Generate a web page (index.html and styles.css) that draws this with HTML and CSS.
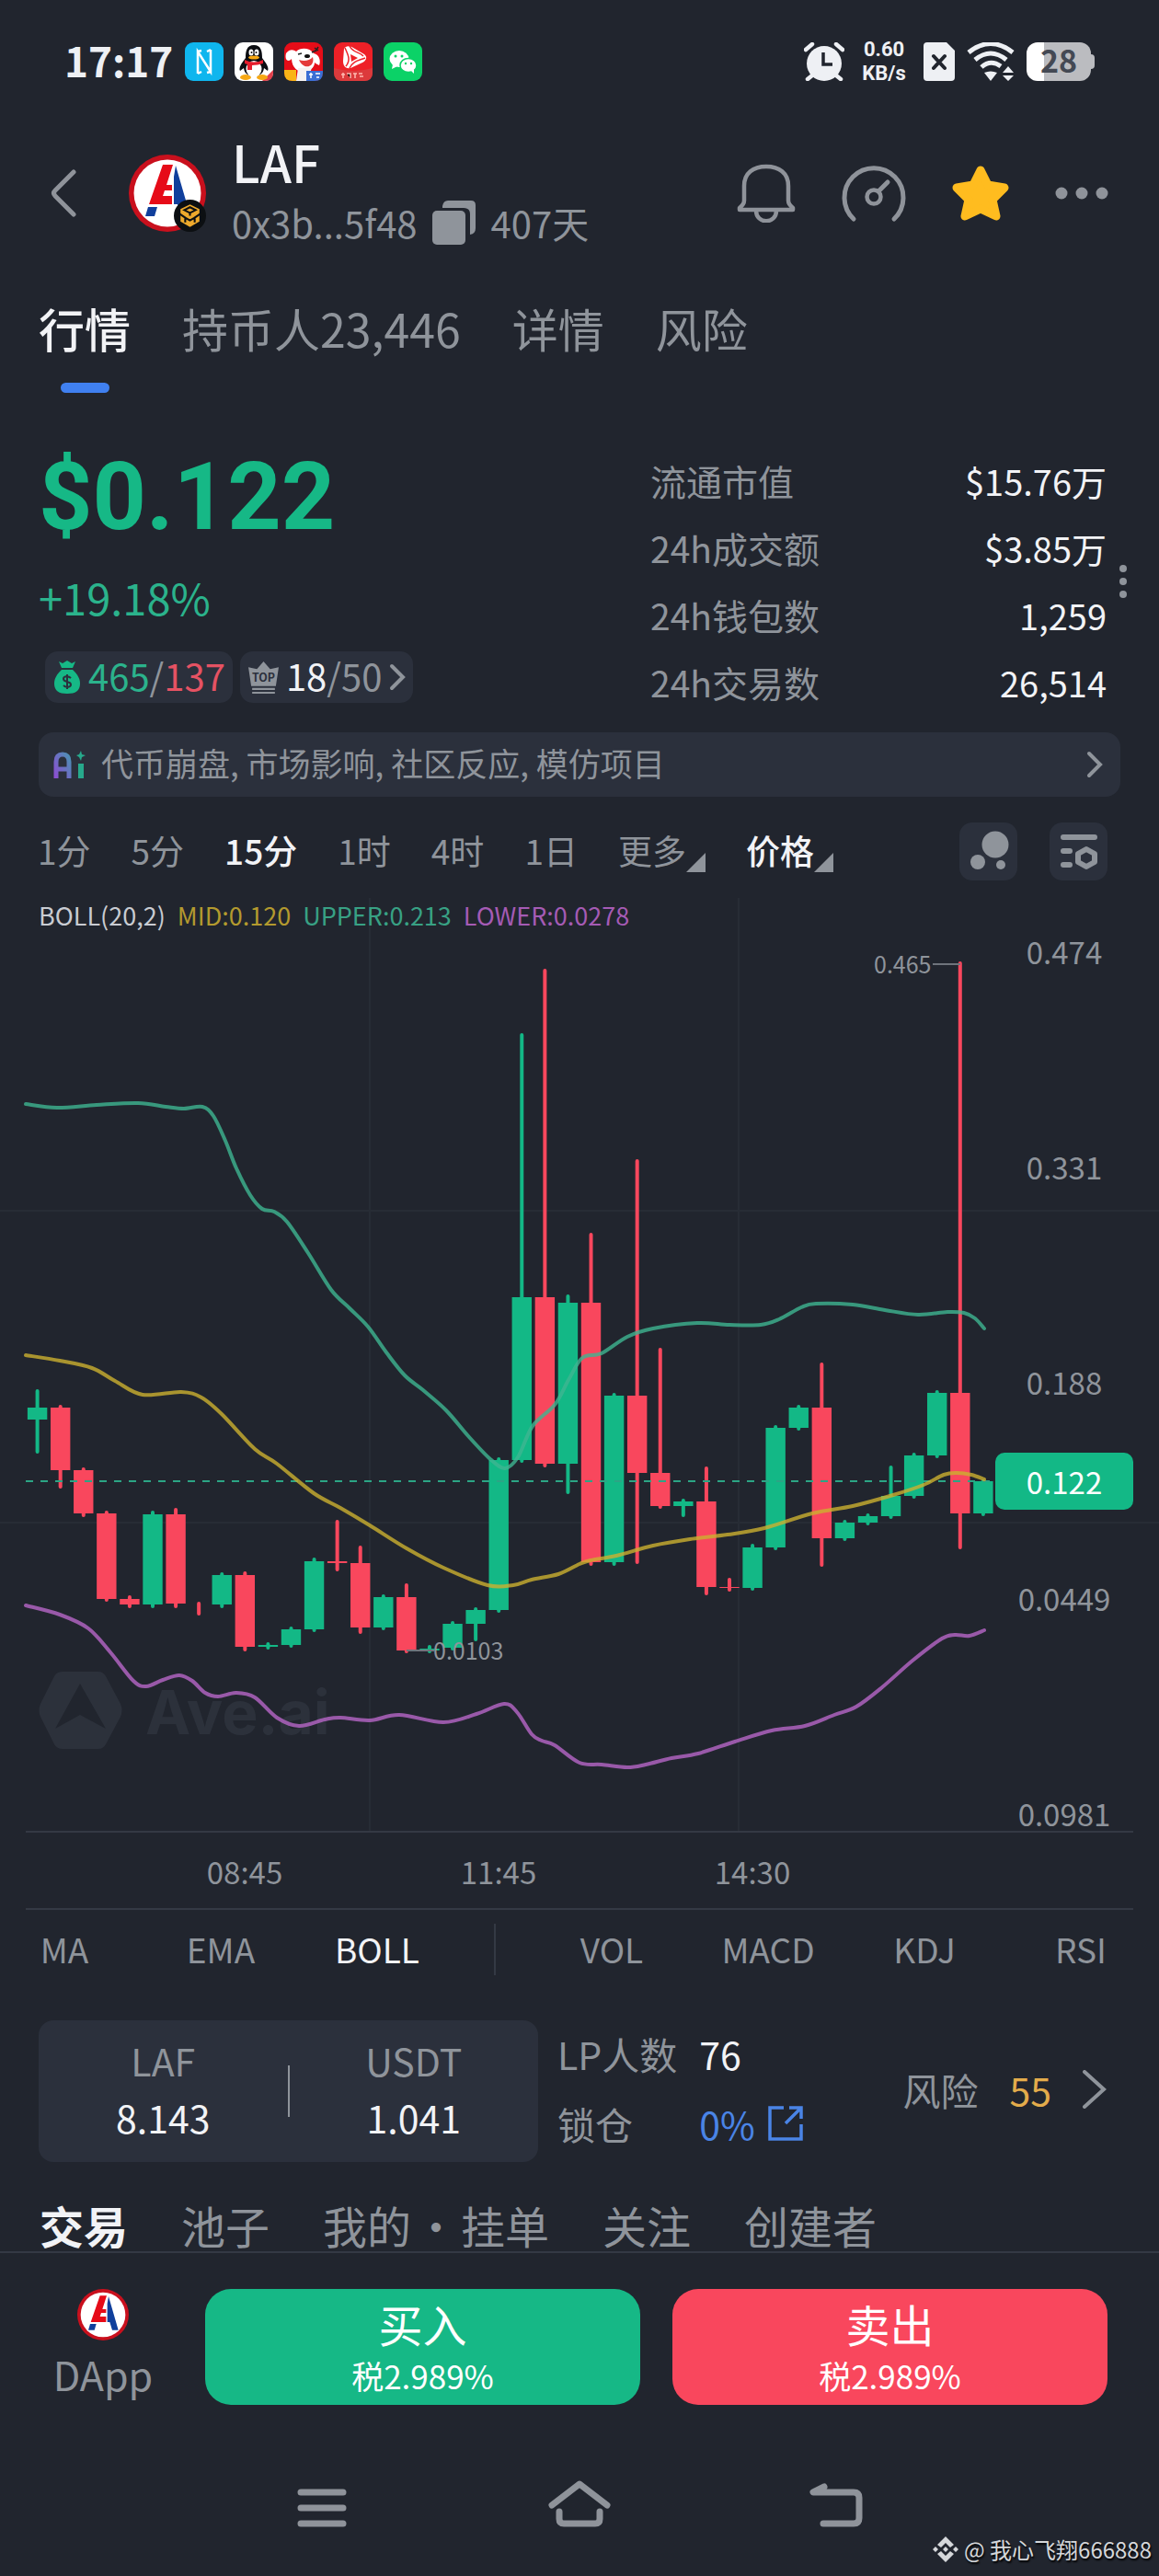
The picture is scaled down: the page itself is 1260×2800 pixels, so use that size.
FILE: index.html
```html
<!DOCTYPE html>
<html lang="zh-CN">
<head>
  <meta charset="UTF-8">
  <meta name="viewport" content="width=device-width, initial-scale=1.0">
  <title>LAF</title>
  <link rel="stylesheet" href="styles.css">
</head>
<body>
  <!-- shared token logo -->
  <svg class="defs" width="0" height="0" aria-hidden="true">
    <symbol id="laf-logo" viewBox="0 0 84 84">
      <circle cx="42" cy="42" r="42" fill="#c9101d"/>
      <circle cx="42" cy="42" r="36.5" fill="#fff"/>
      <path d="M37 11H48L41 33H47V39H39L37 45H47V54H22Z" fill="#e60b18"/>
      <path d="M51 12L67 67H57L53 54H49V24Z" fill="#103f9c"/>
      <path d="M21 57H31L28 67H18Z" fill="#103f9c"/>
    </symbol>
  </svg>

  <div class="status-bar">
    <span class="clock">17:17</span>
    <div class="app-icons">
      <svg viewBox="0 0 42 42"><rect width="42" height="42" rx="9" fill="#0fb6ee"/><path d="M14 34V10L28 32V8M14 34L18 32M14 10L18 9M28 32L24 33M28 8L24 10" fill="none" stroke="#fff" stroke-width="2.5"/></svg>
      <svg viewBox="0 0 42 42"><rect width="42" height="42" rx="9" fill="#fff"/><path d="M30 42L42 30V33Q42 42 33 42Z" fill="#e2404c"/><ellipse cx="12" cy="38" rx="6" ry="3" fill="#f7a813"/><ellipse cx="30" cy="38" rx="6" ry="3" fill="#f7a813"/><path d="M21 3C13 3 12 10 12 17C8 22 4 28 6 31L10 28C11 40 31 40 32 28L36 31C38 28 34 22 30 17C30 10 29 3 21 3Z" fill="#0b0d12"/><ellipse cx="21" cy="29" rx="8.5" ry="9" fill="#fff"/><ellipse cx="18" cy="11" rx="2.5" ry="3.5" fill="#fff"/><ellipse cx="24" cy="11" rx="2.5" ry="3.5" fill="#fff"/><circle cx="18.5" cy="11" r="1" fill="#111"/><circle cx="23.5" cy="11" r="1" fill="#111"/><ellipse cx="21" cy="16.5" rx="6" ry="2" fill="#f7a813"/><path d="M11 19Q21 24 31 19V23Q25 25 19 25V30H14V24L11 23Z" fill="#e51c2c"/></svg>
      <svg viewBox="0 0 42 42"><rect width="42" height="42" rx="9" fill="#e60d18"/><path d="M0 30H13V42H9Q0 42 0 33Z" fill="#f9b417"/><path d="M2 12C6 7 10 8 13 10C18 5 28 6 32 12C38 13 40 20 38 25C36 24 34 23 33 22C33 34 9 38 8 18C5 22 0 20 2 12Z" fill="#fff"/><path d="M13 42L15 28L30 27L26 42Z" fill="#f5f2f2"/><path d="M16 19C21 21 28 20 31 16C34 27 21 31 16 19Z" fill="#e43a3a"/><ellipse cx="25" cy="15" rx="3" ry="2" fill="#111"/><path d="M15 13L19 12M30 11L34 9M33 6L37 9M37 5L34 10" stroke="#222" stroke-width="1.5"/><path d="M24 31H42V33Q42 42 33 42H24Z" fill="#3b6fd4"/><path d="M27 35H31M29 33V39M34 34H39M35 38H38" stroke="#fff" stroke-width="1.5"/></svg>
      <svg viewBox="0 0 42 42"><rect width="42" height="42" rx="9" fill="#ee2027"/><path d="M11 7C13 3 18 4 21 6L33 13C37 16 35 20 31 22L18 28C12 29 10 25 10 20Z" fill="#fff"/><path d="M17 4C21 12 28 10 32 15M34 17C26 20 21 20 17 28M13 26C19 19 15 13 12 6" fill="none" stroke="#ee2027" stroke-width="1.5"/><path d="M18 13L26 17L19 21Z" fill="#ee2027"/><path d="M0 28Q21 34 42 28V33Q42 42 33 42H9Q0 42 0 33Z" fill="#dc3a3c"/><path d="M8 35H12M10 33V39M14 34H18V39M21 34H25M23 34V39M27 34H31M28 37H32" stroke="#ffb9b0" stroke-width="1.5"/></svg>
      <svg viewBox="0 0 42 42"><rect width="42" height="42" rx="9" fill="#0bd267"/><ellipse cx="17" cy="18" rx="10.5" ry="9" fill="#fff"/><path d="M10 24L9 29L15 26Z" fill="#fff"/><ellipse cx="27" cy="25" rx="9" ry="7.5" fill="#fff" stroke="#0bd267" stroke-width="1.5"/><path d="M30 31L33 34V29Z" fill="#fff"/><g fill="#0bd267"><circle cx="13" cy="15" r="1.5"/><circle cx="20" cy="15" r="1.5"/><circle cx="24" cy="23" r="1.2"/><circle cx="30" cy="23" r="1.2"/></g></svg>
    </div>
    <div class="status-right">
      <svg class="alarm" viewBox="0 0 44 42"><circle cx="22" cy="23" r="19" fill="#eef0f4"/><path d="M2 8L9 2M42 8L35 2M4 40L9 36M40 40L35 36" stroke="#eef0f4" stroke-width="4.5" stroke-linecap="round"/><path d="M21 11V24H31" fill="none" stroke="#21252e" stroke-width="3.5"/></svg>
      <div class="net-speed"><span>0.60</span><span>KB/s</span></div>
      <svg class="sim" viewBox="0 0 34 42"><path d="M4 0H25L34 9V38Q34 42 30 42H4Q0 42 0 38V4Q0 0 4 0Z" fill="#eef0f4"/><path d="M11 15L23 28M23 15L11 28" stroke="#21252e" stroke-width="4" stroke-linecap="round"/></svg>
      <svg class="wifi" viewBox="0 0 52 42"><path d="M2 11Q26 -8 50 11M9 19Q26 5 43 19M16 27Q26 18 37 26" fill="none" stroke="#eef0f4" stroke-width="5"/><path d="M19 33Q26 30 33 33L26 42ZM39 33L45 26L51 33ZM39 36H51L45 42Z" fill="#eef0f4"/></svg>
      <div class="battery"><span>28</span></div>
    </div>
  </div>

  <header class="token-header">
    <a class="back" href="#" aria-label="返回"><svg viewBox="0 0 28 52"><path d="M25 3L5 23Q2 26 5 29L25 49" fill="none" stroke="#8f939a" stroke-width="5" stroke-linecap="round"/></svg></a>
    <div class="token-logo">
      <svg viewBox="0 0 84 84"><use href="#laf-logo"/></svg>
      <svg class="chain" viewBox="0 0 34 34"><circle cx="17" cy="17" r="17" fill="#0c0f12"/><path d="M17 5L27 10V23L17 29L7 23V10Z" fill="#eea92c"/><path d="M11 11L17 8L23 11L17 14ZM6 15L12 19V24M28 15L22 19V24M17 14V17M12 19L17 22L22 19" fill="none" stroke="#0c0f12" stroke-width="2"/></svg>
    </div>
    <div class="token-name">
      <h1>LAF</h1>
      <div class="token-sub">
        <span>0x3b...5f48</span>
        <button type="button" aria-label="复制"><svg class="copy" viewBox="0 0 48 48"><path d="M11 6Q12 0 17 0H42Q47 0 47 5V30Q47 36 41 37V15Q41 8 34 8H11Z" fill="#8f949b"/><rect x="0" y="11" width="36" height="37" rx="5" fill="#8f949b"/></svg></button>
        <span>407天</span>
      </div>
    </div>
    <div class="header-actions">
      <button type="button" aria-label="提醒"><svg class="bell" viewBox="0 0 64 64"><path d="M8 40V24C8 10 18 3 32 3S56 10 56 24V40Q56 44 61 48V50H3V48Q8 44 8 40Z" fill="none" stroke="#8f939a" stroke-width="4.5" stroke-linejoin="round"/><path d="M21 51C21 66 43 66 43 51" fill="none" stroke="#8f939a" stroke-width="4.5"/></svg></button>
      <button type="button" aria-label="测速"><svg class="gauge" viewBox="0 0 70 64"><path d="M13 60A32 32 0 1 1 57 60" fill="none" stroke="#8f939a" stroke-width="5" stroke-linecap="round"/><circle cx="35" cy="36" r="7.5" fill="none" stroke="#8f939a" stroke-width="4.5"/><path d="M40 30L50 20" stroke="#8f939a" stroke-width="5" stroke-linecap="round"/></svg></button>
      <button type="button" aria-label="收藏"><svg class="star" viewBox="0 0 62 60"><path d="M31 5L39 21L57 24L44 37L48 55L31 47L14 55L18 37L5 24L23 21Z" fill="#ffbc1f" stroke="#ffbc1f" stroke-width="9" stroke-linejoin="round"/></svg></button>
      <button type="button" aria-label="更多"><svg class="more" viewBox="0 0 58 14"><g fill="#8f939a"><circle cx="7" cy="7" r="6.5"/><circle cx="29" cy="7" r="6.5"/><circle cx="51" cy="7" r="6.5"/></g></svg></button>
    </div>
  </header>

  <nav class="main-tabs">
    <a class="active" href="#">行情</a>
    <a href="#">持币人23,446</a>
    <a href="#">详情</a>
    <a href="#">风险</a>
  </nav>

  <section class="summary">
    <div class="price-box">
      <div class="price">$0.122</div>
      <div class="change">+19.18%</div>
      <div class="pills">
        <div class="pill">
          <svg class="bag" viewBox="0 0 30 36"><path d="M6 1L10 3L15 0L20 3L24 1L21 8H9Z" fill="#16b886"/><path d="M9 10H21C26 15 29 19 29 25C29 33 24 36 15 36S1 33 1 25C1 19 4 15 9 10Z" fill="#16b886"/><path d="M19 19C16 16 11 17 11 20C11 24 19 22 19 26C19 29 14 30 11 27M15 15V31" fill="none" stroke="#2b303c" stroke-width="2"/></svg>
          <span><span class="up">465</span>/<span class="down">137</span></span>
        </div>
        <div class="pill">
          <svg class="crown" viewBox="0 0 32 34"><path d="M0 6L9 8L16 0L23 8L32 6L29 26H3Z" fill="#8f949b"/><path d="M4 28H28V30H4ZM4 32H28V34H4Z" fill="#8f949b"/><text x="16" y="21" text-anchor="middle" class="crown-text">TOP</text></svg>
          <span><span class="white">18</span>/50</span>
          <svg class="chev" viewBox="0 0 18 30"><path d="M3 3L15 15L3 27" fill="none" stroke="#8f949b" stroke-width="4" stroke-linecap="round"/></svg>
        </div>
      </div>
    </div>
    <dl class="stats">
      <div><dt>流通市值</dt><dd>$15.76万</dd></div>
      <div><dt>24h成交额</dt><dd>$3.85万</dd></div>
      <div><dt>24h钱包数</dt><dd>1,259</dd></div>
      <div><dt>24h交易数</dt><dd>26,514</dd></div>
    </dl>
    <svg class="dots-v" viewBox="0 0 8 38"><g fill="#8f949b"><circle cx="4" cy="5" r="4"/><circle cx="4" cy="19" r="4"/><circle cx="4" cy="33" r="4"/></g></svg>
  </section>

  <a class="ai-bar" href="#">
    <svg class="ai-icon" viewBox="0 0 36 30"><defs><linearGradient id="ai" x1="0" y1="1" x2="1" y2="0"><stop offset="0" stop-color="#8a4fd0"/><stop offset="1" stop-color="#4d8fb5"/></linearGradient></defs><path d="M3 30V12Q3 4 10 4T17 12V30M3 20H17" fill="none" stroke="url(#ai)" stroke-width="5"/><path d="M27 14H33V30H27Z" fill="#27a98c"/><path d="M30 0L31 4L35 5L31 7L30 11L28 7L25 5L28 4Z" fill="#27a98c"/></svg>
    <span>代币崩盘, 市场影响, 社区反应, 模仿项目</span>
    <svg class="chev" viewBox="0 0 18 30"><path d="M3 3L15 15L3 27" fill="none" stroke="#8f949b" stroke-width="4" stroke-linecap="round"/></svg>
  </a>

  <div class="intervals">
    <button type="button">1分</button>
    <button type="button">5分</button>
    <button type="button" class="active">15分</button>
    <button type="button">1时</button>
    <button type="button">4时</button>
    <button type="button">1日</button>
    <button type="button" class="drop">更多</button>
    <button type="button" class="drop active">价格</button>
    <div class="chart-tools">
      <button type="button" aria-label="气泡图"><svg viewBox="0 0 63 63"><g fill="#8f949b"><circle cx="39" cy="24" r="14.5"/><circle cx="20" cy="43" r="8"/><circle cx="45" cy="46" r="5"/></g></svg></button>
      <button type="button" aria-label="指标设置"><svg viewBox="0 0 63 63"><path d="M15 16H49M15 31H22M15 46H22" stroke="#8f949b" stroke-width="6" stroke-linecap="round"/><path d="M40 29L49 34V43L40 48L31 43V34Z" fill="none" stroke="#8f949b" stroke-width="6" stroke-linejoin="round"/></svg></button>
    </div>
  </div>

  <div class="chart">
    <div class="legend">
      <span>BOLL(20,2)</span>
      <span class="mid">MID:0.120</span>
      <span class="upper">UPPER:0.213</span>
      <span class="lower">LOWER:0.0278</span>
    </div>
    <svg viewBox="0 957 1260 1117">
      <path class="grid" d="M402 976V1990M803 976V1990M0 1316H1260M0 1655H1260"/>
      <path class="axis" d="M28 1991H1232"/>
      <g class="watermark">
        <path fill-rule="evenodd" d="M68 1817H107Q112 1817 115 1822L131 1852Q134 1859 131 1866L115 1896Q112 1901 107 1901H68Q62 1901 59 1896L44 1866Q41 1859 44 1852L59 1822Q62 1817 68 1817ZM87 1830L60 1879L87 1864L115 1879Z"/>
        <text x="158" y="1885">Ave.ai</text>
      </g>
      <g id="candles"></g>
      <path class="last-price" d="M28 1610H1082"/>
      <g id="bands"></g>
      <path class="mark" d="M1014 1048H1044M442 1794H472"/>
      <g class="mark-text">
        <text x="950" y="1058">0.465</text>
        <text x="471" y="1804">0.0103</text>
      </g>
      <g class="scale">
        <text x="1157" y="1048">0.474</text>
        <text x="1157" y="1282">0.331</text>
        <text x="1157" y="1516">0.188</text>
        <text x="1157" y="1751">0.0449</text>
        <text x="1157" y="1985">0.0981</text>
        <text x="266" y="2048">08:45</text>
        <text x="542" y="2048">11:45</text>
        <text x="818" y="2048">14:30</text>
        <rect x="1082" y="1579" width="150" height="62" rx="10"/>
        <text class="tag" x="1157" y="1624">0.122</text>
      </g>
    </svg>
  </div>

  <div class="indicators">
    <div>
      <button type="button">MA</button>
      <button type="button">EMA</button>
      <button type="button" class="active">BOLL</button>
      <i class="sep"></i>
      <button type="button">VOL</button>
      <button type="button">MACD</button>
      <button type="button">KDJ</button>
      <button type="button">RSI</button>
    </div>
  </div>

  <section class="pool">
    <div class="pool-card">
      <div><span>LAF</span><b>8.143</b></div>
      <i></i>
      <div><span>USDT</span><b>1.041</b></div>
    </div>
    <dl class="lp">
      <dt>LP人数</dt><dd>76</dd>
      <dt>锁仓</dt>
      <dd><a href="#">0%<svg viewBox="0 0 38 38"><path d="M17 2H2V36H36V20M23 2H36V14M35 3L19 19" fill="none" stroke="#4a84e6" stroke-width="3.5"/></svg></a></dd>
    </dl>
    <a class="risk" href="#">
      <span>风险</span><b>55</b>
      <svg viewBox="0 0 26 42"><path d="M2 2L23 21L2 40" fill="none" stroke="#8f949b" stroke-width="4" stroke-linecap="round"/></svg>
    </a>
  </section>

  <nav class="sub-tabs">
    <a class="active" href="#">交易</a>
    <a href="#">池子</a>
    <a href="#">我的<span class="dot">·</span>挂单</a>
    <a href="#">关注</a>
    <a href="#">创建者</a>
  </nav>

  <div class="trade-bar">
    <a class="dapp" href="#"><svg viewBox="0 0 84 84"><use href="#laf-logo"/></svg>DApp</a>
    <button type="button" class="buy">买入<small>税2.989%</small></button>
    <button type="button" class="sell">卖出<small>税2.989%</small></button>
  </div>

  <div class="system-nav">
    <button type="button" aria-label="菜单"><svg viewBox="0 0 68 52"><path d="M11 13H57M11 30H57M11 47H57" fill="none"/></svg></button>
    <button type="button" aria-label="主页"><svg viewBox="0 0 68 52"><path d="M4 27L34 4L64 27M12 34V42Q12 47 17 47H51Q56 47 56 42V34" fill="none"/></svg></button>
    <button type="button" aria-label="返回"><svg viewBox="0 0 68 52"><path d="M20 7L8 13H52Q58 13 58 19V41Q58 47 52 47H19" fill="none"/></svg></button>
  </div>

  <div class="credit">
    <svg viewBox="0 0 28 28"><path d="M14 0L23 9L19 12L14 7L9 12L5 9ZM5 19L9 16L14 21L19 16L23 19L14 28ZM0 14L3 11L6 14L3 17ZM22 14L25 11L28 14L25 17ZM14 11L17 14L14 17L11 14Z" fill="#d5d7da"/></svg>
    <span>@ 我心飞翔666888</span>
  </div>

  <script src="chart.js"></script>
</body>
</html>
```

FILE: styles.css
```css
* {
  box-sizing: border-box;
}

body {
  margin: 0;
  min-height: 100vh;
  position: relative;
  background-color: #21252e;
  color: #8f949b;
  font-family: "Noto Sans CJK SC", "Noto Sans", sans-serif;
}

a {
  color: inherit;
  text-decoration: none;
}

button {
  padding: 0;
  border: none;
  background: none;
  color: inherit;
  font: inherit;
  cursor: pointer;
}

svg {
  display: block;
}

h1, dl, dt, dd {
  margin: 0;
}

.defs {
  position: absolute;
}

.white,
.active {
  color: #f2f3f6;
}

.up {
  color: #2bb38c;
}

.down {
  color: #e55263;
}

/* Status bar */
.status-bar {
  display: flex;
  align-items: center;
  height: 134px;
  padding: 0 70px;
  color: #eef0f4;
}

.clock {
  font-size: 44px;
  font-weight: 700;
  line-height: 60px;
  margin-bottom: 4px;
}

.app-icons {
  display: flex;
  gap: 12px;
  margin-left: 13px;
}

.app-icons svg {
  width: 42px;
  height: 42px;
}

.status-right {
  display: flex;
  align-items: center;
  margin-left: auto;
  gap: 13px;
}

.alarm {
  width: 44px;
  height: 42px;
}

.net-speed {
  display: flex;
  flex-direction: column;
  align-items: center;
  width: 60px;
  font-family: Roboto, "Noto Sans CJK SC", sans-serif;
  font-size: 22px;
  font-weight: 700;
  line-height: 26px;
}

.sim {
  width: 34px;
  height: 42px;
}

.wifi {
  width: 52px;
  height: 42px;
}

.battery {
  position: relative;
  width: 70px;
  height: 42px;
  margin-right: 4px;
  border-radius: 12px;
  background: linear-gradient(to right, #fff 19px, #bbbcc0 19px);
  color: #444954;
  font-size: 34px;
  font-weight: 700;
  line-height: 38px;
  text-align: center;
}

.battery::after {
  content: "";
  position: absolute;
  right: -4px;
  top: 13px;
  width: 4px;
  height: 16px;
  border-radius: 0 4px 4px 0;
  background-color: #bbbcc0;
}

/* Header */
.token-header {
  display: flex;
  align-items: center;
  height: 152px;
  padding: 0 55px;
}

.back svg {
  width: 28px;
  height: 52px;
}

.token-logo {
  position: relative;
  margin-left: 57px;
}

.token-logo svg {
  width: 84px;
  height: 84px;
}

.token-logo .chain {
  position: absolute;
  right: 0;
  bottom: 0;
  width: 35px;
  height: 35px;
}

.token-name {
  margin: 0 0 4px 28px;
}

.token-name h1 {
  color: #f2f3f6;
  font-size: 55px;
  font-weight: 500;
  line-height: 68px;
}

.token-sub {
  display: flex;
  align-items: center;
  gap: 16px;
  font-size: 40px;
  line-height: 66px;
}

.copy {
  width: 48px;
  height: 48px;
}

.header-actions {
  display: flex;
  align-items: center;
  gap: 50px;
  margin-left: auto;
}

.bell {
  width: 64px;
  height: 64px;
}

.gauge {
  width: 70px;
  height: 64px;
}

.star {
  width: 62px;
  height: 60px;
}

.more {
  width: 58px;
  height: 14px;
}

/* Tabs */
.main-tabs {
  display: flex;
  gap: 56px;
  padding: 40px 42px 0;
  font-size: 50px;
  line-height: 60px;
}

.main-tabs .active {
  font-weight: 500;
}

.main-tabs .active::after {
  content: "";
  display: block;
  width: 53px;
  height: 11px;
  margin: 30px auto 0;
  border-radius: 6px;
  background-color: #4080f0;
}

/* Price summary */
.summary {
  display: flex;
  justify-content: space-between;
  padding: 52px 35px 0 42px;
}

.price {
  color: #16b886;
  font-family: Roboto, "Noto Sans CJK SC", sans-serif;
  font-size: 102px;
  font-weight: 700;
  line-height: 122px;
}

.change {
  margin-top: 18px;
  color: #2bb38c;
  font-size: 47px;
  line-height: 60px;
}

.pills {
  display: flex;
  gap: 8px;
  margin: 29px 0 0 7px;
}

.pill {
  display: flex;
  align-items: center;
  gap: 8px;
  height: 56px;
  padding: 0 8px 0 9px;
  border-radius: 14px;
  background-color: #2b303c;
  font-size: 40px;
  line-height: 52px;
}

.pill > span {
  margin-bottom: 4px;
}

.bag {
  width: 30px;
  height: 36px;
}

.crown {
  width: 33px;
  height: 35px;
}

.crown-text {
  fill: #2b303c;
  font-size: 12px;
  font-weight: 700;
}

.chev {
  width: 18px;
  height: 30px;
}

.stats {
  flex: 0 0 496px;
  margin: 7px 14px 0 auto;
  font-size: 38px;
  line-height: 73px;
}

.stats div {
  display: flex;
  justify-content: space-between;
}

.stats dt {
  font-size: 39px;
}

.stats dd {
  color: #f2f3f6;
}

.dots-v {
  width: 8px;
  height: 38px;
  margin-top: 134px;
}

/* AI summary */
.ai-bar {
  display: flex;
  align-items: center;
  height: 70px;
  margin: 18px 42px 0;
  padding: 0 19px 0 16px;
  border-radius: 16px;
  background-color: #2b303c;
  font-size: 35px;
  line-height: 66px;
}

.ai-bar span {
  margin: 0 auto 4px 16px;
}

.ai-icon {
  width: 36px;
  height: 30px;
}

/* Interval row */
.intervals {
  display: flex;
  align-items: center;
  gap: 44px;
  height: 63px;
  margin-top: 28px;
  padding: 0 56px 0 41px;
  font-size: 37px;
  line-height: 56px;
}

.intervals > button {
  margin-bottom: 3px;
}

.intervals > .active {
  font-weight: 500;
}

.drop {
  display: flex;
  align-items: flex-end;
}

.drop::after {
  content: "";
  border-left: 21px solid transparent;
  border-bottom: 21px solid #8f949b;
  margin-bottom: 4px;
}

.chart-tools {
  display: flex;
  gap: 35px;
  margin-left: auto;
}

.chart-tools button {
  border-radius: 14px;
  background-color: #2b303c;
}

.chart-tools svg {
  width: 63px;
  height: 63px;
}

/* Chart */
.chart {
  position: relative;
}

.chart svg {
  width: 100%;
  height: auto;
}

.legend {
  position: absolute;
  top: 20px;
  left: 42px;
  display: flex;
  gap: 13px;
  color: #c9ccd2;
  font-size: 27px;
  line-height: 36px;
}

.legend .mid {
  color: #b39a2e;
}

.legend .upper {
  color: #38a184;
}

.legend .lower {
  color: #a55bb5;
}

.grid {
  fill: none;
  stroke: #272c35;
  stroke-width: 2;
}

.axis {
  stroke: #343944;
  stroke-width: 2;
}

.watermark {
  fill: #2c313b;
}

.watermark text {
  font-family: Inter, sans-serif;
  font-size: 66px;
  font-weight: 700;
}

.candle-up {
  fill: #13b886;
  stroke: #13b886;
}

.candle-down {
  fill: #f9475d;
  stroke: #f9475d;
}

.candle-up line,
.candle-down line {
  stroke-width: 4;
  stroke-linecap: round;
}

.candle-up rect,
.candle-down rect {
  stroke: none;
}

.last-price {
  stroke: #2ba585;
  stroke-width: 2;
  stroke-dasharray: 8 8;
}

.band {
  fill: none;
  stroke-width: 4;
  stroke-linecap: round;
  stroke-opacity: 0.8;
}

.band-upper {
  stroke: #3fb591;
}

.band-mid {
  stroke: #ccb030;
}

.band-lower {
  stroke: #b866c8;
}

.mark {
  stroke: #6f747c;
  stroke-width: 2;
}

.mark-text {
  fill: #8f949b;
  font-size: 25px;
}

.scale {
  fill: #8f949b;
  font-size: 33px;
  text-anchor: middle;
}

.scale rect {
  fill: #13b886;
}

.scale .tag {
  fill: #fff;
}

/* Indicators */
.indicators {
  margin: 0 28px;
  border-top: 2px solid #343944;
  font-size: 37px;
}

.indicators > div {
  display: flex;
  align-items: center;
  height: 86px;
  margin: 0 -28px 0 -43px;
}

.indicators button {
  flex: 2;
  line-height: 52px;
  margin-bottom: 3px;
}

.sep {
  flex: 1;
  height: 56px;
  background: linear-gradient(#343944, #343944) center / 2px 100% no-repeat;
}

/* Pool */
.pool {
  display: flex;
  align-items: center;
  margin-top: 32px;
  padding: 0 57px 0 42px;
  font-size: 41px;
}

.pool b {
  font-weight: 400;
}

.pool-card {
  display: flex;
  align-items: center;
  flex: 0 0 543px;
  height: 154px;
  border-radius: 16px;
  background-color: #2b303c;
}

.pool-card div {
  flex: 1;
  display: flex;
  flex-direction: column;
  text-align: center;
  line-height: 62px;
  margin-bottom: 6px;
}

.pool-card b {
  color: #f2f3f6;
}

.pool-card i {
  width: 2px;
  height: 56px;
  background-color: #8f949b;
}

.lp {
  display: grid;
  grid-template-columns: auto auto;
  column-gap: 24px;
  margin: 0 0 6px 21px;
  line-height: 76px;
}

.lp dd {
  color: #f2f3f6;
}

.lp a {
  display: flex;
  align-items: center;
  gap: 14px;
  color: #4a84e6;
}

.lp svg {
  width: 38px;
  height: 38px;
}

.risk {
  display: flex;
  align-items: center;
  margin: 0 0 4px auto;
  line-height: 56px;
}

.risk b {
  margin: 0 34px;
  color: #e3ac4b;
}

.risk svg {
  width: 26px;
  height: 42px;
}

/* Lower tabs */
.sub-tabs {
  display: flex;
  gap: 58px;
  margin-top: 38px;
  padding: 0 43px;
  border-bottom: 2px solid #343944;
  font-size: 48px;
  line-height: 57px;
}

.sub-tabs .active {
  font-weight: 700;
}

.sub-tabs .dot {
  display: inline-block;
  width: 54px;
  text-align: center;
}

/* Trade bar */
.trade-bar {
  display: flex;
  padding: 39px 56px 0 56px;
}

.dapp {
  display: flex;
  flex-direction: column;
  align-items: center;
  width: 112px;
  margin-right: 55px;
  font-size: 43px;
  line-height: 72px;
}

.dapp svg {
  width: 56px;
  height: 56px;
}

.buy,
.sell {
  flex: 1;
  display: flex;
  flex-direction: column;
  align-items: center;
  height: 126px;
  padding-top: 7px;
  border-radius: 28px;
  color: #fff;
  font-size: 48px;
  line-height: 60px;
}

.buy {
  margin-right: 35px;
  background-color: #16b886;
}

.sell {
  background-color: #f9475d;
}

.buy small,
.sell small {
  font-size: 35px;
  line-height: 54px;
}

/* System navigation */
.system-nav {
  display: flex;
  justify-content: center;
  gap: 212px;
  padding: 80px 0 50px;
}

.system-nav svg {
  width: 68px;
  height: 52px;
  stroke: #8f939a;
  stroke-width: 7;
  stroke-linecap: round;
  stroke-linejoin: round;
}

.credit {
  position: absolute;
  right: 8px;
  bottom: 11px;
  display: flex;
  align-items: center;
  gap: 6px;
  color: #d5d7da;
  font-size: 24px;
  line-height: 36px;
  text-shadow: 1px 2px 2px #000;
}

.credit svg {
  width: 28px;
  height: 28px;
}
```

FILE: chart.js
```js
const SVG_NS = "http://www.w3.org/2000/svg";
const FIRST_X = 40.6;
const STEP = 25.08;
const BODY_WIDTH = 21.4;

// [up, high, body top, body bottom, low] in chart units
const candles = [
  [1, 1512, 1530, 1543, 1578], [0, 1529, 1530, 1598, 1616], [0, 1597, 1598, 1645, 1647],
  [0, 1644, 1645, 1738, 1739], [0, 1736, 1738, 1744, 1746], [1, 1644, 1646, 1744, 1746],
  [0, 1641, 1646, 1743, 1746], [0, 1743, 1743, 1743, 1754], [1, 1711, 1712, 1744, 1746],
  [0, 1710, 1712, 1790, 1793], [1, 1787, 1788, 1790, 1791], [1, 1770, 1771, 1788, 1789],
  [1, 1695, 1697, 1771, 1772], [0, 1654, 1697, 1699, 1706], [0, 1682, 1699, 1769, 1774],
  [1, 1735, 1736, 1769, 1770], [0, 1723, 1736, 1794, 1795], [1, 1790, 1792, 1794, 1795],
  [1, 1764, 1765, 1791, 1792], [1, 1749, 1750, 1765, 1782], [1, 1586, 1587, 1750, 1751],
  [1, 1125, 1410, 1587, 1588], [0, 1055, 1410, 1591, 1593], [1, 1409, 1416, 1591, 1622],
  [0, 1342, 1416, 1698, 1700], [1, 1516, 1517, 1698, 1700], [0, 1262, 1517, 1601, 1698],
  [0, 1467, 1601, 1637, 1638], [1, 1631, 1632, 1637, 1647], [0, 1596, 1632, 1725, 1732],
  [0, 1717, 1725, 1726, 1728], [1, 1680, 1682, 1726, 1727], [1, 1551, 1552, 1682, 1683],
  [1, 1529, 1530, 1552, 1553], [0, 1483, 1530, 1672, 1701], [1, 1654, 1655, 1672, 1673],
  [1, 1647, 1648, 1655, 1656], [1, 1595, 1626, 1648, 1649], [1, 1581, 1582, 1626, 1627],
  [1, 1513, 1514, 1582, 1583], [0, 1047, 1514, 1645, 1682], [1, 1610, 1610, 1645, 1646]
];

const bands = {
  upper: [[28, 1200], [62, 1204], [105, 1201], [150, 1199], [180, 1203], [200, 1205], [220, 1203],
    [232, 1213], [245, 1240], [257, 1270], [272, 1299], [285, 1314], [298, 1317], [312, 1328],
    [335, 1362], [360, 1402], [380, 1422], [400, 1442], [420, 1470], [440, 1495], [460, 1511],
    [485, 1533], [510, 1562], [533, 1586], [549, 1596], [563, 1584], [579, 1550], [603, 1527],
    [618, 1500], [633, 1476], [654, 1471], [682, 1453], [710, 1444], [758, 1438], [793, 1440],
    [827, 1440], [847, 1434], [871, 1421], [887, 1417], [927, 1418], [962, 1424], [998, 1429],
    [1030, 1426], [1048, 1427], [1060, 1433], [1070, 1444]],
  mid: [[28, 1473], [65, 1479], [100, 1487], [125, 1501], [155, 1516], [197, 1513], [219, 1519],
    [241, 1537], [277, 1575], [301, 1591], [341, 1623], [370, 1639], [402, 1658], [442, 1683],
    [482, 1704], [530, 1723], [558, 1723], [578, 1717], [607, 1711], [630, 1700], [642, 1696],
    [670, 1691], [710, 1680], [750, 1673], [791, 1668], [831, 1661], [883, 1645], [927, 1637],
    [971, 1625], [1004, 1614], [1026, 1603], [1040, 1601], [1056, 1603], [1070, 1608]],
  lower: [[28, 1745], [65, 1755], [96, 1770], [120, 1796], [145, 1827], [159, 1833], [177, 1826],
    [195, 1821], [209, 1827], [223, 1840], [237, 1844], [257, 1840], [277, 1845], [301, 1867],
    [325, 1876], [353, 1869], [370, 1867], [402, 1870], [434, 1864], [482, 1872], [518, 1863],
    [548, 1852], [562, 1861], [578, 1885], [589, 1892], [603, 1897], [630, 1916], [654, 1918],
    [682, 1921], [702, 1918], [730, 1911], [759, 1906], [799, 1893], [839, 1881], [875, 1876],
    [907, 1864], [931, 1855], [959, 1834], [992, 1805], [1024, 1781], [1038, 1777], [1054, 1778],
    [1070, 1772]]
};

function make(name, attrs, parent) {
  const el = document.createElementNS(SVG_NS, name);
  for (const key in attrs) {
    el.setAttribute(key, attrs[key]);
  }
  parent.appendChild(el);
  return el;
}

function smoothPath(points) {
  let d = `M${points[0].join(" ")}`;
  for (let i = 0; i < points.length - 1; i++) {
    const p0 = points[i - 1] || points[i];
    const p1 = points[i];
    const p2 = points[i + 1];
    const p3 = points[i + 2] || p2;
    const c1 = [p1[0] + (p2[0] - p0[0]) / 6, p1[1] + (p2[1] - p0[1]) / 6];
    const c2 = [p2[0] - (p3[0] - p1[0]) / 6, p2[1] - (p3[1] - p1[1]) / 6];
    d += ` C${c1.join(" ")} ${c2.join(" ")} ${p2.join(" ")}`;
  }
  return d;
}

const candleLayer = document.getElementById("candles");
candles.forEach(([up, high, top, bottom, low], i) => {
  const x = FIRST_X + i * STEP;
  const group = make("g", { class: up ? "candle-up" : "candle-down" }, candleLayer);
  make("line", { x1: x, x2: x, y1: high, y2: low }, group);
  make("rect", { x: x - BODY_WIDTH / 2, y: top, width: BODY_WIDTH, height: bottom - top }, group);
});

const bandLayer = document.getElementById("bands");
for (const name in bands) {
  make("path", { class: `band band-${name}`, d: smoothPath(bands[name]) }, bandLayer);
}
```
